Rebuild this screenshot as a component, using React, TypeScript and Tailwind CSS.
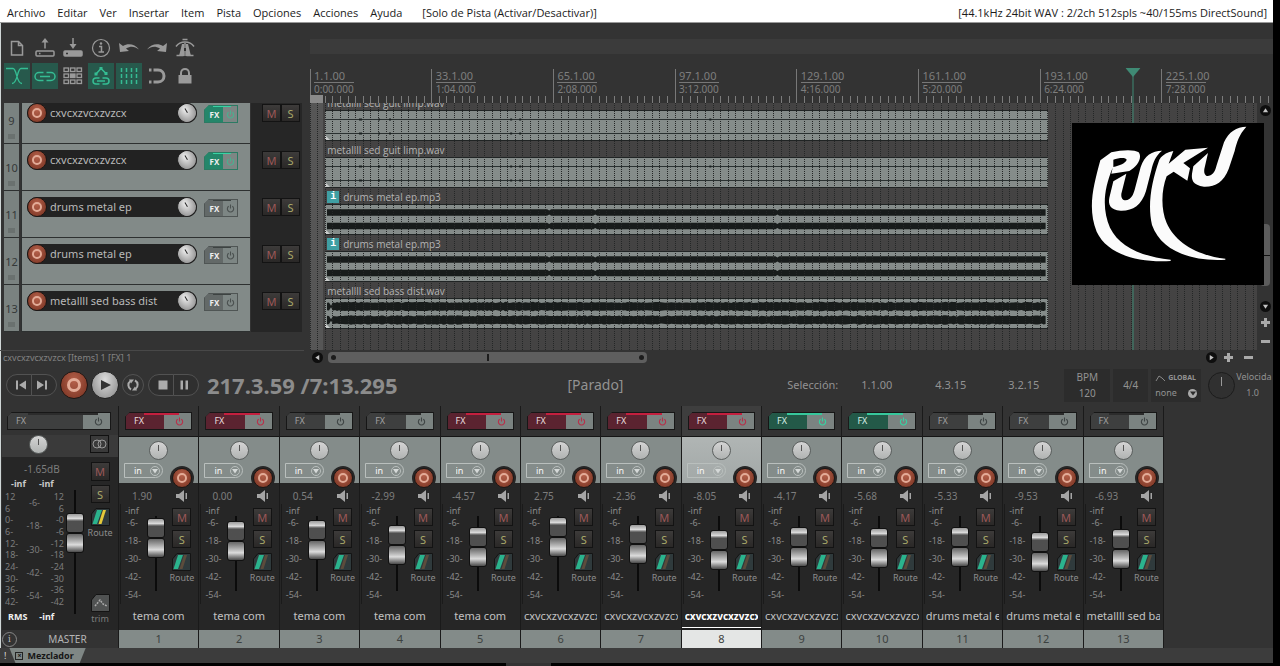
import type { ReactNode } from "react";
import clsx from "clsx";

type FxState = "off" | "red" | "green";

type TrackRow = {
  id: number;
  name: string;
  fx: FxState;
  clip: string;
  kind: "guitar" | "drums" | "bass";
};

type Strip = {
  id: number;
  name: string;
  volume: string;
  fader: number;
  fx: FxState;
  selected?: boolean;
};

const MENU = ["Archivo", "Editar", "Ver", "Insertar", "Item", "Pista", "Opciones", "Acciones", "Ayuda"];

const TRACKS: TrackRow[] = [
  { id: 9, name: "cxvcxzvcxzvzcx", fx: "green", clip: "metallll sed guit limp.wav", kind: "guitar" },
  { id: 10, name: "cxvcxzvcxzvzcx", fx: "green", clip: "metallll sed guit limp.wav", kind: "guitar" },
  { id: 11, name: "drums metal ep", fx: "off", clip: "drums metal ep.mp3", kind: "drums" },
  { id: 12, name: "drums metal ep", fx: "off", clip: "drums metal ep.mp3", kind: "drums" },
  { id: 13, name: "metallll sed bass dist", fx: "off", clip: "metallll sed bass dist.wav", kind: "bass" },
];

const STRIPS: Strip[] = [
  { id: 1, name: "tema com", volume: "1.90", fader: 2, fx: "red" },
  { id: 2, name: "tema com", volume: "0.00", fader: 5, fx: "red" },
  { id: 3, name: "tema com", volume: "0.54", fader: 4, fx: "off" },
  { id: 4, name: "tema com", volume: "-2.99", fader: 9, fx: "off" },
  { id: 5, name: "tema com", volume: "-4.57", fader: 11, fx: "red" },
  { id: 6, name: "cxvcxzvcxzvzcx", volume: "2.75", fader: 1, fx: "red" },
  { id: 7, name: "cxvcxzvcxzvzcx", volume: "-2.36", fader: 8, fx: "red" },
  { id: 8, name: "cxvcxzvcxzvzcx", volume: "-8.05", fader: 14, fx: "red", selected: true },
  { id: 9, name: "cxvcxzvcxzvzcx", volume: "-4.17", fader: 11, fx: "green" },
  { id: 10, name: "cxvcxzvcxzvzcx", volume: "-5.68", fader: 12, fx: "green" },
  { id: 11, name: "drums metal ep", volume: "-5.33", fader: 11, fx: "off" },
  { id: 12, name: "drums metal ep", volume: "-9.53", fader: 16, fx: "off" },
  { id: 13, name: "metallll sed bass dist", volume: "-6.93", fader: 13, fx: "off" },
];

const MARKS = [
  ["1.1.00", "0:00.000"],
  ["33.1.00", "1:04.000"],
  ["65.1.00", "2:08.000"],
  ["97.1.00", "3:12.000"],
  ["129.1.00", "4:16.000"],
  ["161.1.00", "5:20.000"],
  ["193.1.00", "6:24.000"],
  ["225.1.00", "7:28.000"],
];

// bars visible in the arrange view; everything on the timeline is a share of it
const BARS = 249;
const barPct = (bar: number) => `${(bar / BARS) * 100}%`;

function ToolIcon({ label, active, children }: { label: string; active?: boolean; children: ReactNode }) {
  return (
    <button
      aria-label={label}
      className={clsx(
        "flex h-[26px] w-[26px] items-center justify-center",
        active ? "bg-[#27594c] text-[#35bd93]" : "text-[#9a9a9a]",
      )}
    >
      <svg viewBox="0 0 26 26" className="h-[26px] w-[26px]" fill="none" stroke="currentColor" strokeWidth="1.5">
        {children}
      </svg>
    </button>
  );
}

function Toolbar() {
  return (
    <div className="flex flex-col gap-[2px] pb-[14px] pl-1 pt-3">
      <div className="flex gap-[2px]">
        <ToolIcon label="Nuevo">
          <path d="M7.500 6.500h7l4 4v9.500h-11zM14.500 6.500v4h4" />
        </ToolIcon>
        <ToolIcon label="Abrir">
          <rect x="4" y="16" width="18" height="5" rx="1" />
          <path d="M13 13.500V6M7 18.500h1.500" />
          <path d="M9.500 7.500L13 3l3.500 4.500z" fill="currentColor" stroke="none" />
        </ToolIcon>
        <ToolIcon label="Guardar">
          <rect x="4" y="16" width="18" height="5" rx="1" fill="currentColor" />
          <path d="M13 3v7" />
          <path d="M9.500 9L13 14l3.500-5z" fill="currentColor" stroke="none" />
          <path d="M6 18.500h2" stroke="#333" />
        </ToolIcon>
        <ToolIcon label="Propiedades">
          <circle cx="13" cy="13" r="8.500" strokeWidth="1.200" />
          <path d="M11 11.500h2.500v5M10.500 17h5.500" />
          <circle cx="13" cy="8.500" r="1.200" fill="currentColor" stroke="none" />
        </ToolIcon>
        <ToolIcon label="Deshacer">
          <path d="M3 8l1 9 9-1-3-2.500c5-3 9-2 13 1C19 9 12 8 7 11z" fill="currentColor" stroke="none" />
        </ToolIcon>
        <ToolIcon label="Rehacer">
          <path d="M23 8l-1 9-9-1 3-2.500c-5-3-9-2-13 1C7 9 14 8 19 11z" fill="currentColor" stroke="none" />
        </ToolIcon>
        <ToolIcon label="Metrónomo">
          <path d="M4 11.500c2.500-3.500 5-4.500 9-4.500s6.500 1 9 4.500M10.500 4.500h5" />
          <path d="M10 9h2v12H7zM16 9h-2v12h5z" fill="currentColor" stroke="none" />
          <path d="M13 8v5M13 16v5M4.500 20.500h7M14.500 20.500h7" />
        </ToolIcon>
      </div>
      <div className="flex gap-[2px]">
        <ToolIcon label="Crossfade" active>
          <path d="M2 5.500h7c4 0 3 15 9 15M24 5.500h-7c-4 0-3 15-9 15" strokeWidth="1.300" />
        </ToolIcon>
        <ToolIcon label="Agrupar items" active>
          <rect x="3" y="9.500" width="20" height="8" rx="4" />
          <path d="M13 8v3.500M13 15.500V19" stroke="#27594c" strokeWidth="3" />
          <path d="M8 13.500h10" />
        </ToolIcon>
        <ToolIcon label="Edición ripple">
          {[5, 11, 17].map((y) =>
            [4, 10.5, 17].map((x) => (
              <rect
                key={`${x}-${y}`}
                x={x}
                y={y}
                width="4.500"
                height="3.500"
                strokeWidth="1.300"
                fill={y === 11 && x === 10.5 ? "currentColor" : "none"}
              />
            )),
          )}
        </ToolIcon>
        <ToolIcon label="Mover envolventes" active>
          <path d="M8 11l5-5.500 5 5" />
          <path d="M6.500 9.500h3v3h-3zM11.500 4h3v3h-3zM16.500 9h3v3h-3z" fill="currentColor" stroke="none" />
          <rect x="5" y="15" width="16" height="6" rx="3" />
          <path d="M13 14v8" stroke="#27594c" strokeWidth="3" />
          <path d="M9 18h8" />
        </ToolIcon>
        <ToolIcon label="Rejilla" active>
          <path d="M5.500 5v16M10.500 5v16M15.500 5v16M20.500 5v16" strokeDasharray="4 2" />
        </ToolIcon>
        <ToolIcon label="Ajustar">
          <path d="M9.500 7h4.500c8 0 8 12 0 12H9.500" strokeWidth="3" />
          <path d="M5 7h2.500M5 19h2.500" strokeWidth="3" />
        </ToolIcon>
        <ToolIcon label="Bloquear">
          <rect x="6.500" y="12" width="13" height="8.500" fill="currentColor" stroke="none" />
          <path d="M9 12.500V10c0-5.500 8-5.500 8 0v2.500" strokeWidth="2" />
        </ToolIcon>
      </div>
    </div>
  );
}

function PowerIcon() {
  return (
    <svg viewBox="0 0 10 10" className="h-[9px] w-[9px]" fill="none" stroke="currentColor" strokeWidth="1.200">
      <path d="M3 2.500a3.500 3.500 0 1 0 4 0M5 .5v4.500" />
    </svg>
  );
}

function RecordButton({ size }: { size: "sm" | "lg" }) {
  return (
    <button
      aria-label="Grabar"
      className={clsx(
        "flex shrink-0 items-center justify-center rounded-full border border-[#1d1614] bg-radial-[at_50%_35%] from-[#b5604a] to-[#74301f]",
        size === "lg" ? "size-7" : "size-[20px]",
      )}
    >
      <span
        className={clsx(
          "rounded-full border-[#e3ab97]",
          size === "lg" ? "size-[14px] border-3" : "size-[10px] border-2",
        )}
      />
    </button>
  );
}

function Knob() {
  return (
    <span className="flex size-[19px] shrink-0 justify-center rounded-full border border-[#5b5f5e] bg-linear-to-b from-[#d4d4d4] to-[#b0b3b2] pt-[3px]">
      <span className="h-[6px] w-px bg-[#555]" />
    </span>
  );
}

function MuteSolo({ kind, size }: { kind: "M" | "S"; size: string }) {
  return (
    <button
      className={clsx(
        "flex items-center justify-center border border-[#131313] bg-linear-to-b from-[#3d3b3a] to-[#2a2827] text-[11px] leading-none",
        kind === "M" ? "text-[#9c5858]" : "text-[#a9a96a]",
        size,
      )}
    >
      {kind}
    </button>
  );
}

const MIX_FX: Record<FxState, string> = {
  off: "bg-[#3e3f3f] text-[#a0a0a0]",
  red: "bg-[#5b2330] text-[#e8dede]",
  green: "bg-[#235948] text-[#d7efe7]",
};

const FX_LINE: Record<FxState, string> = { off: "bg-[#2c2c2c]", red: "bg-[#c41f3e]", green: "bg-[#37c79c]" };
const FX_POWER: Record<FxState, string> = { off: "text-[#3f4545]", red: "text-[#b8304a]", green: "text-[#35d3a2]" };

function MixerFx({ state, master }: { state: FxState; master?: boolean }) {
  return (
    <div className="relative flex h-[18px] w-full border border-[#171717] bg-[#171717] [clip-path:polygon(5px_0,100%_0,100%_100%,0_100%,0_5px)]">
      <button className={clsx("grow pl-2 text-left text-[9px] leading-[16px]", MIX_FX[state])}>FX</button>
      <button
        aria-label="Activar FX"
        className={clsx("flex w-[27px] items-center justify-center bg-[#7b8381] pl-1", FX_POWER[state])}
      >
        <PowerIcon />
      </button>
      <span className={clsx("absolute right-[12px] top-0 h-[2px]", master ? "left-[20px]" : "left-[18px]", FX_LINE[state])} />
    </div>
  );
}

function TrackFx({ state }: { state: FxState }) {
  const on = state === "green";
  return (
    <div
      className={clsx(
        "relative flex h-[18px] w-[34px] border [clip-path:polygon(5px_0,100%_0,100%_100%,0_100%,0_5px)]",
        on ? "border-[#2c7a63] bg-[#2c7a63]" : "border-[#4f5554] bg-[#4f5554]",
      )}
    >
      <button
        className={clsx("w-[18px] pl-px text-[8px] font-bold leading-[17px] text-[#eee]", on ? "bg-[#24866a]" : "bg-[#636968]")}
      >
        FX
      </button>
      <button
        aria-label="Activar FX"
        className={clsx("flex grow items-center justify-center bg-[#7d8684]", on ? "text-[#4bb090]" : "text-[#4a504f]")}
      >
        <PowerIcon />
      </button>
      <span className={clsx("absolute left-[8px] right-[6px] top-0 h-px", on ? "bg-[#37d3a4]" : "bg-[#3d4342]")} />
    </div>
  );
}

function TrackPanel({ track, first }: { track: TrackRow; first: boolean }) {
  return (
    <li className={clsx("flex overflow-hidden", first ? "h-[41px]" : "h-[47px]")}>
      <div className="flex w-[15px] flex-col items-center justify-end gap-[6px] border-b border-[#2d3030] bg-[#7a8280] pb-1 text-[11px] leading-[14px] text-[#343838]">
        <span>{track.id}</span>
        <span className="h-[5px] w-[7px] bg-[#6a716f]" />
      </div>
      <div className="ml-[2px] flex w-[229px] items-end border-b border-l border-[#2d3030] bg-[#828a88] pb-[20px] pl-[5px]">
        <div className="flex h-5 w-[170px] items-center justify-between rounded-full bg-[#222]">
          <RecordButton size="sm" />
          <span className="ml-[3px] grow truncate text-[11px] leading-5 text-[#b9b9b9]">{track.name}</span>
          <span className="flex size-5 rotate-[-30deg] justify-center rounded-full border border-[#222] bg-radial-[at_50%_30%] from-[#eee] to-[#7d7d7d] pt-1">
            <span className="h-[5px] w-px bg-[#222]" />
          </span>
        </div>
        <div className="ml-[7px] flex">
          <TrackFx state={track.fx} />
        </div>
      </div>
      <div className="ml-px flex w-[51px] items-end bg-[#262626] pb-[22px] pl-[11px]">
        <MuteSolo kind="M" size="h-[18px] w-[19px]" />
        <MuteSolo kind="S" size="h-[18px] w-[19px]" />
      </div>
    </li>
  );
}

// deterministic jitter so that the wave outline stays the same on each render
const jitter = (i: number) => Math.abs(Math.sin(i * 12.9898) * 43758.5453) % 1;

function wavePath(kind: TrackRow["kind"]) {
  return [7.5, 21]
    .map((mid, channel) => {
      const top: string[] = [];
      const bottom: string[] = [];
      for (let x = 2; x <= 720; x += 2) {
        let half = kind === "bass" ? 3.6 + jitter(x + channel) * 1.1 : 3.3;
        if (kind === "drums" && [224, 270, 452].some((n) => Math.abs(n - x) < 2)) half = 2;
        if (kind === "bass" && x === 6) half = 0.8;
        top.push(`${x},${(mid - half).toFixed(1)}`);
        bottom.unshift(`${x},${(mid + half).toFixed(1)}`);
      }
      return `M${top.join("L")}L${bottom.join("L")}Z`;
    })
    .join("");
}

function Clip({ track, first }: { track: TrackRow; first: boolean }) {
  return (
    <li className={clsx("flex flex-col justify-end overflow-hidden pb-[3px]", first ? "h-[41px]" : "h-[47px]")}>
      <div className="relative z-10 flex h-[14px] shrink-0 items-center gap-1 pl-[2px] font-['Open_Sans',sans-serif] text-[10px] leading-[14px] text-[#b4b4b4]">
        {track.kind === "drums" && (
          <span className="flex h-3 w-3 items-center justify-center bg-[#3f9fa3] font-mono text-[10px] font-bold leading-3 text-white">
            i
          </span>
        )}
        {track.clip}
      </div>
      <svg
        viewBox="0 0 722 29"
        preserveAspectRatio="none"
        className="h-[31px] w-full shrink-0 border-y border-[#202424] bg-[#858c8a]"
      >
        {track.kind === "guitar" ? (
          <>
            <path d="M0 8.500h722M0 22.500h722" stroke="#2a3131" vectorEffect="non-scaling-stroke" />
            <path
              d="M34 8.500h3M53 8.500h2M64 8.500h2M185 8.500h2M194 8.500h2M384 8.500h2M34 22.500h3M53 22.500h2M64 22.500h2M185 22.500h2M194 22.500h2"
              stroke="#1a2020"
              strokeWidth="2"
            />
          </>
        ) : (
          <path d={wavePath(track.kind)} fill="#181c1b" />
        )}
        <path d="M0 29v-5l5 5z" fill="#c9cccb" />
      </svg>
    </li>
  );
}

function Ruler() {
  return (
    <div className="relative flex h-[34px]">
      <svg className="absolute inset-0 h-full w-full overflow-visible" shapeRendering="crispEdges">
        {Array.from({ length: 127 }, (_, i) => (
          <line
            key={i}
            x1={barPct(i * 2)}
            x2={barPct(i * 2)}
            y1={i % 16 === 0 ? 0 : 27}
            y2={34}
            stroke={i % 16 === 0 ? "#787878" : "#7c7c7c"}
          />
        ))}
        <rect x="0" y="26" width="13" height="8" fill="#8a8a8a" />
      </svg>
      {MARKS.map(([bar, time]) => (
        <div
          key={bar}
          className="shrink-0 overflow-visible whitespace-nowrap pl-1 text-[11px] leading-[13px] text-[#7e7e7e]"
          style={{ width: barPct(32) }}
        >
          <span className="block h-[14px] w-10 border-b border-[#777]">{bar}</span>
          <span className="block text-[10px] leading-3">{time}</span>
        </div>
      ))}
    </div>
  );
}

function PukuLogo() {
  return (
    <svg viewBox="0 0 576 486" className="h-full w-full" fill="#fbfbfb" role="img" aria-label="Puku">
      <path
        fillRule="evenodd"
        d="M85 112L118 88C150 80 188 79 200 88C212 104 196 132 172 144L118 152L122 134C92 206 92 262 114 314C142 370 204 400 296 410L296 414C188 420 104 390 74 326C46 256 64 190 85 112ZM124 132C142 128 162 120 164 110C162 102 140 104 124 110Z"
      />
      <path d="M124 175L163 152L148 212C146 232 160 236 172 228C182 220 184 212 188 200L206 132C218 96 240 84 270 83C250 100 244 116 238 142L222 204C208 248 182 264 146 263C114 260 108 244 112 224Z" />
      <path d="M262 110C274 92 288 88 304 84L290 122L340 80L408 74L334 120L354 136L346 173L305 146L284 160C268 202 266 256 284 300C308 356 374 398 460 407L460 410C350 416 266 380 240 306C226 246 238 178 262 110Z" />
      <path d="M364 130L408 90L397 138C394 160 408 164 420 154C430 146 432 132 436 120L456 58C470 26 494 12 523 11C502 34 494 58 488 84L470 138C454 178 430 192 396 191C362 186 358 170 360 152Z" />
    </svg>
  );
}

function RoundArrow({ label, turn }: { label: string; turn: string }) {
  return (
    <button aria-label={label} className="flex size-[11px] items-center justify-center rounded-full bg-[#0e0e0e]">
      <svg viewBox="0 0 8 8" className={clsx("size-[7px]", turn)}>
        <path d="M4 1.500L7 6H1z" fill="#c4c4c4" />
      </svg>
    </button>
  );
}

function ZoomSign({ plus }: { plus?: boolean }) {
  return (
    <button aria-label={plus ? "Acercar" : "Alejar"} className="flex size-[10px] items-center justify-center">
      <svg viewBox="0 0 9 9" className="size-[9px]">
        <path d={plus ? "M0 4.500h9M4.500 0v9" : "M0 4.500h9"} stroke="#aaa" strokeWidth="3" />
      </svg>
    </button>
  );
}

function Arrange() {
  return (
    <section className="flex">
      <div className="w-[309px] shrink-0">
        <Toolbar />
        <ul className="pl-1">
          {TRACKS.map((track, i) => (
            <TrackPanel key={track.id} track={track} first={i === 0} />
          ))}
        </ul>
      </div>
      <div className="min-w-0 grow pl-px pt-4">
        <div className="mb-[15px] h-[15px] bg-[#3b3b3b]" />
        <div className="flex">
          <div className="relative min-w-0 grow">
            <Ruler />
            <div className="relative bg-[#444343] pb-[18px]">
              <div className="absolute inset-y-0 left-0 w-[13px] bg-[#565656]" />
              <ul style={{ marginLeft: barPct(4), width: barPct(190) }}>
                {TRACKS.map((track, i) => (
                  <Clip key={track.id} track={track} first={i === 0} />
                ))}
              </ul>
              <svg className="pointer-events-none absolute inset-0 h-full w-full" shapeRendering="crispEdges">
                {Array.from({ length: 125 }, (_, i) => (
                  <line
                    key={i}
                    x1={barPct(i * 2)}
                    x2={barPct(i * 2)}
                    y1="0"
                    y2="100%"
                    stroke="#242626"
                    strokeDasharray="1 1"
                  />
                ))}
              </svg>
            </div>
            <div className="absolute inset-y-0 w-[15px] -translate-x-1/2" style={{ left: barPct(216.5) }}>
              <div className="mx-auto h-full w-px bg-[#3f8a74]" />
              <svg viewBox="0 0 15 9" className="absolute left-0 top-[-1px] h-[9px] w-[15px]">
                <path d="M0 0h15L7.500 9z" fill="#3f8a74" />
              </svg>
            </div>
          </div>
          <div className="relative flex w-4 shrink-0 flex-col items-center pt-9">
            <RoundArrow label="Subir" turn="rotate-0" />
            <div className="mt-[108px] flex h-[62px] w-[10px] items-center rounded bg-[#5c5c5c]">
              <span className="h-px w-full bg-[#111]" />
            </div>
            <div className="mt-[15px] flex flex-col items-center gap-[5px]">
              <RoundArrow label="Bajar" turn="rotate-180" />
              <ZoomSign plus />
              <span className="pt-1">
                <ZoomSign />
              </span>
            </div>
            <div className="absolute right-[9px] top-[54px] h-[162px] w-[192px] bg-black">
              <PukuLogo />
            </div>
          </div>
        </div>
      </div>
    </section>
  );
}

function ScrollRow() {
  return (
    <div className="flex h-[15px] items-center">
      <div className="mr-2 w-[304px] shrink-0 border-t border-[#484848] pl-[3px] text-[9px] leading-[14px] text-[#838383]">
        cxvcxzvcxzvzcx [Items] 1 [FX] 1
      </div>
      <RoundArrow label="Izquierda" turn="-rotate-90" />
      <div className="ml-[5px] flex h-[11px] w-[319px] items-center justify-between rounded bg-[#5e5e5e] px-[3px]">
        <span className="size-[5px] rounded-full bg-[#1c1c1c]" />
        <span className="h-[7px] w-[2px] bg-[#1c1c1c]" />
        <span className="size-[5px] rounded-full bg-[#1c1c1c]" />
      </div>
      <div className="ml-auto flex items-center gap-[6px] pr-5">
        <RoundArrow label="Derecha" turn="rotate-90" />
        <ZoomSign plus />
        <span className="pl-1">
          <ZoomSign />
        </span>
      </div>
    </div>
  );
}

function PillButton({ label, side, d }: { label: string; side: "l" | "r"; d: string }) {
  return (
    <button
      aria-label={label}
      className={clsx(
        "flex h-[22px] w-[26px] items-center justify-center border border-[#525252] bg-[#2f2f2f] text-[#ababab]",
        side === "l" ? "rounded-l-full pl-1" : "-ml-px rounded-r-full pr-1",
      )}
    >
      <svg viewBox="0 0 12 12" className="size-3" fill="currentColor">
        <path d={d} />
      </svg>
    </button>
  );
}

function Transport() {
  return (
    <section className="flex h-10 items-center pl-[6px] text-[#929292]">
      <PillButton label="Inicio" side="l" d="M1 1.500h2v9H1zM11 1.500v9L4 6z" />
      <PillButton label="Final" side="r" d="M9 1.500h2v9H9zM1 1.500v9L8 6z" />
      <div className="ml-[3px] flex items-center gap-[3px]">
        <RecordButton size="lg" />
        <button
          aria-label="Reproducir"
          className="flex size-7 items-center justify-center rounded-full border border-[#222] bg-radial-[at_50%_30%] from-[#dcdcdc] to-[#858585]"
        >
          <svg viewBox="0 0 12 12" className="size-3">
            <path d="M2 1l10 5-10 5z" fill="#333" />
          </svg>
        </button>
        <button
          aria-label="Repetir"
          className="flex size-[22px] items-center justify-center rounded-full border border-[#525252]"
        >
          <svg viewBox="0 0 14 14" className="size-[14px]" fill="none" stroke="#ababab" strokeWidth="2">
            <path d="M5 11.500A5 5 0 0 1 4.500 3M9 2.500A5 5 0 0 1 9.500 11" />
            <path d="M3 1.500h5l-3 4zM11 12.500H6l3-4z" fill="#ababab" stroke="none" />
          </svg>
        </button>
      </div>
      <div className="ml-1 flex">
        <PillButton label="Detener" side="l" d="M1.500 1.500h9v9h-9z" />
        <PillButton label="Pausa" side="r" d="M2.500 1.500h2.500v9H2.500zM7.500 1.500H10v9H7.500z" />
      </div>
      <span className="ml-2 w-[361px] whitespace-nowrap text-[22px] font-bold leading-6 text-[#8c8c8c]">
        217.3.59 /7:13.295
      </span>
      <span className="w-[220px] text-[14px] leading-5">[Parado]</span>
      <div className="flex text-[11px] leading-4">
        <span className="w-[74px]">Selección:</span>
        <span className="w-[74px]">1.1.00</span>
        <span className="w-[73px]">4.3.15</span>
        <span className="w-[56px]">3.2.15</span>
      </div>
      <div className="flex h-[33px] min-w-0 items-center text-[10px] leading-4">
        <div className="h-full w-[46px] shrink-0 bg-[#2c2c2c] text-center">
          <div>BPM</div>
          <div>120</div>
        </div>
        <div className="ml-[3px] h-full w-[35px] shrink-0 bg-[#2c2c2c] text-center leading-[32px]">4/4</div>
        <div className="ml-[3px] flex h-full w-[50px] shrink-0 flex-col justify-center bg-[#2c2c2c] px-1">
          <div className="flex items-center gap-[2px] text-[7px] font-bold leading-4">
            <svg viewBox="0 0 11 8" className="h-2 w-[11px] shrink-0" fill="none" stroke="#888">
              <path d="M1 7l3-5 3 2 3 3" />
            </svg>
            <span>GLOBAL</span>
          </div>
          <div className="flex items-center justify-between text-[9px] leading-[14px]">
            none
            <span className="flex size-[9px] items-center justify-center rounded-full bg-[#aaa]">
              <svg viewBox="0 0 6 6" className="size-[6px]">
                <path d="M0 1.500h6L3 5.500z" fill="#2c2c2c" />
              </svg>
            </span>
          </div>
        </div>
        <span className="ml-[7px] flex size-[27px] shrink-0 justify-center rounded-full border border-[#1c1c1c] bg-[#303030] pt-1">
          <span className="h-[9px] w-px bg-[#999]" />
        </span>
        <div className="ml-px w-[37px] shrink-0 text-[9px]">
          <div>Velocida</div>
          <div className="pl-[10px]">1.0</div>
        </div>
      </div>
    </section>
  );
}

function Fader({ label, offset, tall }: { label: string; offset: number; tall?: boolean }) {
  return (
    <div className={clsx("relative w-[18px]", tall ? "h-[124px]" : "h-[75px]")}>
      <div className="absolute inset-y-0 left-2 w-[2px] bg-[#0b0b0b]" />
      <div className="relative h-10" style={{ top: offset }}>
        <div className="h-5 rounded-[3px] border border-[#111] bg-linear-to-b from-[#9b9b9b] via-[#dadada] via-25% to-[#4f4f4f] to-40%" />
        <div className="h-5 rounded-[3px] border border-[#111] bg-linear-to-b from-[#666] via-[#dcdcdc] via-60% to-[#4c4c4c]" />
      </div>
      <input
        type="range"
        aria-label={label}
        className="absolute inset-0 h-full w-full cursor-pointer opacity-0 [direction:rtl] [writing-mode:vertical-lr]"
      />
    </div>
  );
}

function RouteButton({ receive }: { receive?: boolean }) {
  return (
    <button className="flex flex-col items-center text-[9px] leading-[13px] text-[#8c8c8c]">
      <svg viewBox="0 0 19 18" className="h-[18px] w-[19px]">
        <path d="M5 .5h13.500v17H.5V6z" fill="#2f3a3c" stroke="#141414" />
        <path d="M6 2h5L6 16H1.500z" fill="#2bb38d" />
        <path d="M12 2h3l-4.500 14H7.500z" fill={receive ? "#e3c93a" : "#5b4c3c"} />
      </svg>
      Route
    </button>
  );
}

function Speaker() {
  return (
    <svg viewBox="0 0 12 12" className="size-3">
      <path d="M1 4h3l5-4v12L4 8H1zM10.500 3h1.500v6h-1.500z" fill="#a5a5a5" />
    </svg>
  );
}

function InputSelect({ id }: { id: number }) {
  return (
    <label className="relative block h-[15px] w-[39px]">
      <select
        aria-label={`Entrada ${id}`}
        className="block h-full w-full appearance-none rounded-r-full border border-[#b9bfbd] pl-[9px] text-[9px] leading-3 text-[#f8f8f8]"
      >
        <option>in</option>
      </select>
      <span className="pointer-events-none absolute right-[3px] top-[3px] flex size-[10px] items-center justify-center rounded-full border border-[#b9bfbd]">
        <svg viewBox="0 0 6 6" className="size-[6px]">
          <path d="M0 1h6L3 5.500z" fill="#d5d9d8" />
        </svg>
      </span>
    </label>
  );
}

function MixerStrip({ strip }: { strip: Strip }) {
  const { selected } = strip;
  return (
    <div className="flex min-w-0 flex-col border-r border-[#1a1a1a]">
      <div className={clsx("px-[6px] pb-[6px] pt-[6px]", selected && "bg-[#3e3e3e]")}>
        <MixerFx state={strip.fx} />
      </div>
      <div
        className={clsx(
          "relative h-[47px] border-t border-[#151515] pl-[5px] pt-1",
          selected ? "bg-linear-to-b from-[#b0b5b4] to-[#a2a8a7]" : "bg-[#848c8a]",
        )}
      >
        <div className="flex justify-center pr-[5px]">
          <Knob />
        </div>
        <div className="pt-[3px]">
          <InputSelect id={strip.id} />
        </div>
        <div className="absolute bottom-[-7px] right-[4px] rounded-full bg-[#262626] p-[2px]">
          <RecordButton size="sm" />
        </div>
      </div>
      <div className="h-[147px] overflow-hidden bg-[#262626] pt-[5px]">
        <div className="flex h-4 items-center justify-between pl-[7px] pr-[11px]">
          <span className="w-8 text-center text-[10px] leading-4 text-[#7d7d7d]">{strip.volume}</span>
          <Speaker />
        </div>
        <div className="flex">
          <div className="ml-px w-7 border-l border-[#1a1a1a] pl-1 pt-px text-[9px] leading-[18px] text-[#8a8a8a]">
            <div className="h-3 leading-3">-inf</div>
            <div className="pl-[2px] leading-3">-6-</div>
            <div className="pt-[3px]">
              {["-18-", "-30-", "-42-", "-54-"].map((db) => (
                <div key={db}>{db}</div>
              ))}
            </div>
          </div>
          <div className="-ml-px pt-3">
            <Fader label={`Volumen ${strip.id}`} offset={strip.fader} />
          </div>
          <div className="ml-auto flex w-8 flex-col items-center pr-px pt-1">
            <MuteSolo kind="M" size="h-[18px] w-[19px]" />
            <span className="h-1" />
            <MuteSolo kind="S" size="h-[18px] w-[19px]" />
            <span className="h-[5px]" />
            <RouteButton />
          </div>
        </div>
        <div
          className={clsx(
            "mx-[3px] mt-1 overflow-hidden whitespace-nowrap leading-4",
            strip.name.length > 8 ? "text-left" : "text-center",
            selected ? "text-[10px] font-bold text-white" : "text-[11px] text-[#c2c2c2]",
          )}
        >
          {strip.name}
        </div>
      </div>
      <div
        className={clsx(
          "h-[18px] text-center text-[11px] leading-[18px] text-[#3c4140]",
          selected ? "bg-[#e4e6e5] shadow-[0_-2px_0_#1d1d1d,0_-3px_0_#fff]" : "bg-[#838b89]",
        )}
      >
        {strip.id}
      </div>
    </div>
  );
}

function MasterStrip() {
  const scale = ["12", "6", "0", "6", "12", "18", "24", "30", "36", "42"];
  return (
    <div className="flex w-[118px] shrink-0 flex-col pl-[2px]">
      <div className="pb-[5px] pl-[5px] pr-[7px] pt-[6px]">
        <MixerFx state="off" master />
      </div>
      <div className="flex h-[22px] items-start justify-between bg-[#3a3a3a] pl-[27px] pr-[9px]">
        <Knob />
        <button aria-label="Estéreo" className="flex h-[18px] w-[19px] items-center justify-center border border-[#111]">
          <svg viewBox="0 0 15 10" className="h-[10px] w-[15px]" fill="none" stroke="#999">
            <circle cx="5" cy="5" r="4" />
            <circle cx="10" cy="5" r="4" />
          </svg>
        </button>
      </div>
      <div className="flex h-[173px] bg-[#262626] pr-[5px] text-[9px] text-[#7d7d7d]">
        <div className="flex w-[62px] flex-col pt-1">
          <div className="pl-[22px] text-[10px] leading-4">-1.65dB</div>
          <div className="flex gap-[13px] pl-[9px] font-bold leading-[14px] text-[#c9c9c9]">
            <span>-inf</span>
            <span>-inf</span>
          </div>
          <div className="flex h-[116px] justify-between pl-[3px] leading-[11px]">
            <div className="flex flex-col justify-between">
              {scale.map((db, i) => (
                <span key={i}>{i < 2 ? db : `${db}-`}</span>
              ))}
            </div>
            <div className="flex flex-col justify-between py-[6px]">
              {["-6-", "-18-", "-30-", "-42-", "-54-"].map((db) => (
                <span key={db} className="text-center">
                  {db}
                </span>
              ))}
            </div>
            <div className="flex flex-col justify-between text-right">
              {scale.map((db, i) => (
                <span key={i}>{i < 2 ? db : `-${db}`}</span>
              ))}
            </div>
          </div>
          <div className="flex gap-3 pl-[6px] pt-[3px] font-bold leading-[14px] text-[#efefef]">
            <span>RMS</span>
            <span>-inf</span>
          </div>
        </div>
        <div className="ml-[2px] pt-[33px]">
          <Fader label="Volumen master" offset={23} tall />
        </div>
        <div className="ml-auto flex w-[26px] flex-col items-center pt-[5px]">
          <MuteSolo kind="M" size="h-[19px] w-[19px]" />
          <span className="h-1" />
          <MuteSolo kind="S" size="h-[18px] w-[19px]" />
          <span className="h-[5px]" />
          <RouteButton receive />
          <button className="mt-auto flex flex-col items-center pb-[5px] leading-[13px]">
            <svg viewBox="0 0 19 18" className="h-[18px] w-[19px]">
              <path d="M5 .5h13.500v17H.5V6z" fill="#505252" stroke="#141414" />
              <path d="M4 12l5-6 3 4 4 2" fill="none" stroke="#aaa" strokeDasharray="2 1" strokeWidth="1.500" />
            </svg>
            trim
          </button>
        </div>
      </div>
      <div className="flex h-[18px] items-center text-[11px] leading-[18px] text-[#b5b5b5]">
        <span className="flex size-[15px] items-center justify-center rounded-full border border-[#888] font-serif text-[10px] leading-none">
          i
        </span>
        <span className="grow text-center text-[10px]">MASTER</span>
      </div>
    </div>
  );
}

function Mixer() {
  return (
    <section className="flex pt-px">
      <MasterStrip />
      <div className="mr-[109px] grid min-w-0 grow grid-cols-13 border-l border-[#1a1a1a]">
        {STRIPS.map((strip) => (
          <MixerStrip key={strip.id} strip={strip} />
        ))}
      </div>
    </section>
  );
}

export default function App() {
  return (
    <div className="min-h-screen overflow-hidden bg-black pr-[7px] font-['Noto_Sans','Open_Sans',sans-serif]">
      <div className="bg-[#333] shadow-[inset_1px_0_0_#cfd6d6]">
        <header className="flex h-[23px] items-center justify-between border-b border-[#999] bg-white pl-[7px] pr-[6px] pt-[3px] font-['Open_Sans',sans-serif] text-[11px] leading-4 text-[#1b1b1b]">
          <nav className="flex items-center gap-3 whitespace-nowrap">
            {MENU.map((item) => (
              <button key={item}>{item}</button>
            ))}
            <span className="ml-2">[Solo de Pista (Activar/Desactivar)]</span>
          </nav>
          <span className="whitespace-nowrap">[44.1kHz 24bit WAV : 2/2ch 512spls ~40/155ms DirectSound]</span>
        </header>
        <Arrange />
        <ScrollRow />
        <Transport />
        <Mixer />
        <footer className="flex h-[15px] items-center bg-[#3c3c3c] pl-1 text-[9px] leading-[14px] text-[#ddd]">
          !
          <button className="ml-[3px] flex h-full items-center gap-1 bg-[#7f8785] pl-[6px] pr-3 font-bold text-[#161616] [clip-path:polygon(0_0,100%_0,calc(100%-6px)_100%,6px_100%)]">
            <span className="flex size-[8px] items-center justify-center border border-[#222] text-[7px] leading-none">×</span>
            Mezclador
          </button>
        </footer>
      </div>
      <div className="flex h-[3px] justify-center pr-[216px]">
        <span className="h-full w-[45px] bg-[#333]" />
      </div>
    </div>
  );
}
